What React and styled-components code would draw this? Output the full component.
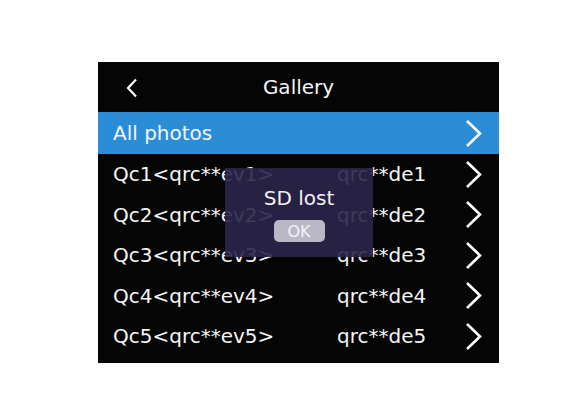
import React from 'react';
import styled, {createGlobalStyle} from 'styled-components';

const Global = createGlobalStyle`
  html, body {
    margin: 0;
    padding: 0;
    background: #ffffff;
  }
  body {
    font-family: 'DejaVu Sans', 'Liberation Sans', sans-serif;
  }
`;

const Page = styled.div`
  width: 581px;
  height: 414px;
  padding: 62px 0 0 98px;
  box-sizing: border-box;
`;

const Screen = styled.div`
  position: relative;
  width: 401px;
  height: 301px;
  background: #050505;
  color: #f4f4f4;
  display: flex;
  flex-direction: column;
`;

const Header = styled.div`
  height: 50px;
  flex-shrink: 0;
  display: flex;
  align-items: center;
  justify-content: center;
  position: relative;
  font-size: 20px;
`;

const Back = styled.svg`
  position: absolute;
  left: 28px;
  top: 16px;
`;

const Row = styled.div`
  height: ${p => (p.active ? '42px' : '40.5px')};
  flex-shrink: 0;
  display: grid;
  grid-template-columns: 224px 1fr 18px;
  align-items: center;
  padding: 0 16px 0 15px;
  background: ${p => (p.active ? '#2b8dd5' : '#050505')};
  font-size: 20px;
  white-space: nowrap;
`;

const Dialog = styled.div`
  position: absolute;
  left: 127px;
  top: 106px;
  width: 148px;
  height: 89px;
  background: rgba(43, 37, 74, 0.9);
  display: flex;
  flex-direction: column;
  align-items: center;
  padding-top: 18px;
  box-sizing: border-box;
  gap: 10px;
`;

const Title = styled.div`
  font-size: 20px;
  color: #f2f2f4;
`;

const OkButton = styled.div`
  width: 51px;
  height: 22px;
  border-radius: 5px;
  background: #bab8c6;
  color: #f4f4f6;
  font-size: 16px;
  display: flex;
  align-items: center;
  justify-content: center;
`;

const Chevron = () => (
  <svg width="18" height="29" viewBox="0 0 18 29">
    <polyline points="2,2 15,14.5 2,27" fill="none" stroke="#ffffff" strokeWidth="2.6" />
  </svg>
);

const rows = [1, 2, 3, 4, 5];

export default function App() {
  return (
    <>
      <Global />
      <Page>
        <Screen>
          <Header>
            <Back width="12" height="20" viewBox="0 0 12 20">
              <polyline points="10,1.5 2,10 10,18.5" fill="none" stroke="#ffffff" strokeWidth="2.2" />
            </Back>
            Gallery
          </Header>
          <Row active>
            <span>All photos</span>
            <span></span>
            <Chevron />
          </Row>
          {rows.map(n => (
            <Row key={n}>
              <span>{`Qc${n}<qrc**ev${n}>`}</span>
              <span>{`qrc**de${n}`}</span>
              <Chevron />
            </Row>
          ))}
          <Dialog>
            <Title>SD lost</Title>
            <OkButton>OK</OkButton>
          </Dialog>
        </Screen>
      </Page>
    </>
  );
}
